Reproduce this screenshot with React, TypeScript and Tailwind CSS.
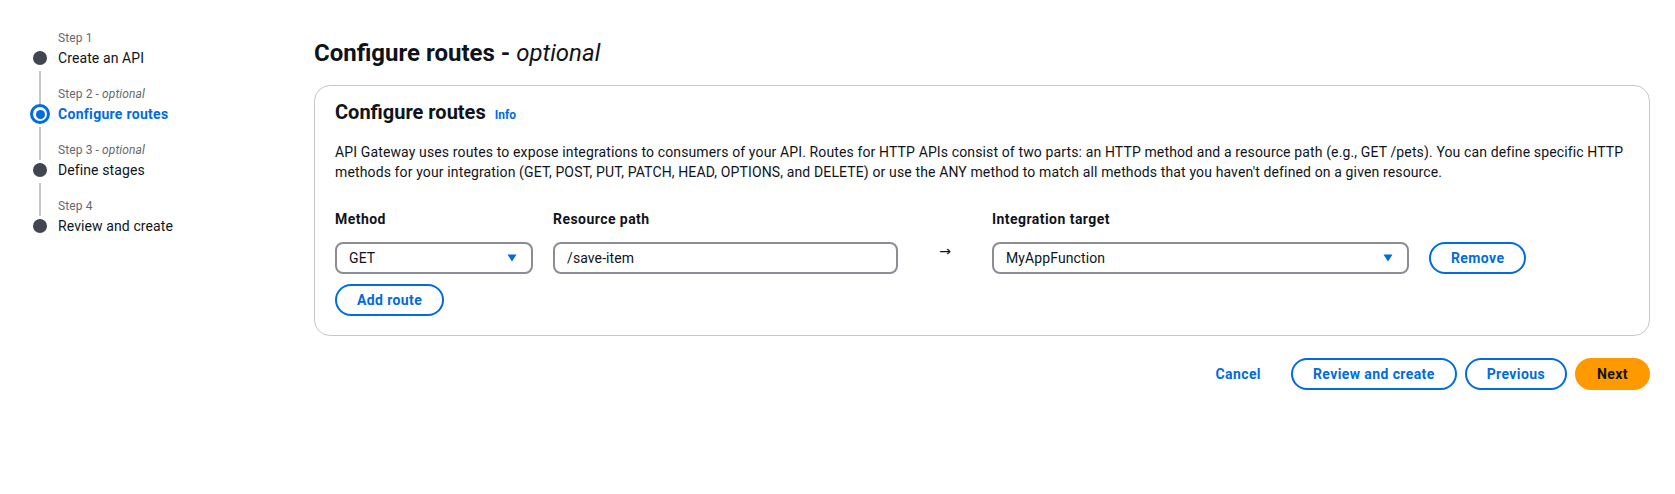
import React from 'react';

const steps = [
  { label: 'Step 1', optional: false, title: 'Create an API' },
  { label: 'Step 2', optional: true, title: 'Configure routes', active: true },
  { label: 'Step 3', optional: true, title: 'Define stages' },
  { label: 'Step 4', optional: false, title: 'Review and create' },
];

function Caret() {
  return (
    <svg width="10" height="8" viewBox="0 0 10 8" className="shrink-0">
      <path d="M0.5 0.5 L9.5 0.5 L5 7.5 Z" fill="#006ce0" />
    </svg>
  );
}

function Select({ value }: { value: string }) {
  return (
    <div className="flex h-8 items-center justify-between rounded-lg border-2 border-[#8c8c94] bg-white pl-3 pr-[14px] text-sm tracking-[0.1px] text-[#0f141a]">
      <span>{value}</span>
      <Caret />
    </div>
  );
}

function OutlineButton({ children }: { children: React.ReactNode }) {
  return (
    <button className="flex h-8 items-center justify-center whitespace-nowrap rounded-full border-2 border-[#006ce0] bg-white px-[20px] text-sm font-bold tracking-[0.4px] text-[#006ce0]">
      {children}
    </button>
  );
}

function Sidebar() {
  return (
    <nav className="w-[314px] shrink-0 pl-[30px] pt-[28px]">
      {steps.map((s, i) => (
        <div key={s.label} className="flex gap-2">
          <div className="flex w-5 flex-col items-center">
            {i > 0 ? <div className="h-5 w-[2px] bg-[#c6c6cd]" /> : <div className="h-5" />}
            <div className="flex h-5 w-5 items-center justify-center">
              {s.active ? (
                <div className="flex h-5 w-5 items-center justify-center rounded-full border-[3px] border-[#006ce0] bg-white">
                  <div className="h-[9px] w-[9px] rounded-full bg-[#006ce0]" />
                </div>
              ) : (
                <div className="h-[14px] w-[14px] rounded-full bg-[#424650]" />
              )}
            </div>
            {i < steps.length - 1 && <div className="mt-[3px] w-[2px] flex-1 bg-[#c6c6cd]" />}
          </div>
          <div className="pb-4">
            <div className="text-xs leading-5 tracking-[0.1px] text-[#656871]">
              {s.label}
              {s.optional && (
                <>
                  {' - '}
                  <i>optional</i>
                </>
              )}
            </div>
            <div
              className={
                s.active
                  ? 'text-sm font-bold leading-5 tracking-[0.3px] text-[#006ce0]'
                  : 'text-sm leading-5 tracking-[0.1px] text-[#0f141a]'
              }
            >
              {s.title}
            </div>
          </div>
        </div>
      ))}
    </nav>
  );
}

export default function App() {
  return (
    <div className="flex min-h-screen bg-white font-['Roboto',sans-serif] text-[#0f141a]">
      <Sidebar />

      <main className="flex-1 pr-[25px] pt-[38px]">
        <h1 className="text-2xl font-bold leading-[30px]">
          Configure routes - <i className="font-normal">optional</i>
        </h1>

        <section className="mt-[17px] rounded-2xl border border-[#c6c6cd] px-5 pb-[19px] pt-[14px]">
          <div className="flex items-baseline gap-[9px]">
            <h2 className="text-xl font-bold leading-6">Configure routes</h2>
            <a className="text-xs font-bold text-[#006ce0]">Info</a>
          </div>

          <p className="mt-[18px] whitespace-nowrap text-sm leading-5 tracking-[0.13px]">
            API Gateway uses routes to expose integrations to consumers of your API. Routes for HTTP APIs consist of
            two parts: an HTTP method and a resource path (e.g., GET /pets). You can define specific HTTP
            <br />
            methods for your integration (GET, POST, PUT, PATCH, HEAD, OPTIONS, and DELETE) or use the ANY method to
            match all methods that you haven't defined on a given resource.
          </p>

          <div className="mt-[27px] grid grid-cols-[198px_345px_54px_417px_auto] gap-x-5 gap-y-[13px]">
            <div className="text-sm font-bold leading-5 tracking-[0.45px]">Method</div>
            <div className="text-sm font-bold leading-5 tracking-[0.45px]">Resource path</div>
            <div />
            <div className="text-sm font-bold leading-5 tracking-[0.45px]">Integration target</div>
            <div />

            <Select value="GET" />
            <div className="flex h-8 items-center rounded-lg border-2 border-[#8c8c94] bg-white px-3 text-sm tracking-[0.1px]">
              /save-item
            </div>
            <div className="flex h-8 justify-center pt-[1px] font-['DejaVu_Sans',sans-serif] text-sm leading-4">→</div>
            <Select value="MyAppFunction" />
            <div className="flex">
              <OutlineButton>Remove</OutlineButton>
            </div>
          </div>

          <div className="mt-[10px] flex">
            <OutlineButton>Add route</OutlineButton>
          </div>
        </section>

        <div className="mt-[22px] flex items-center justify-end gap-2">
          <button className="flex h-8 items-center px-[22px] text-sm font-bold tracking-[0.4px] text-[#006ce0]">
            Cancel
          </button>
          <OutlineButton>Review and create</OutlineButton>
          <OutlineButton>Previous</OutlineButton>
          <button className="flex h-8 items-center rounded-full border-2 border-[#ff9900] bg-[#ff9900] px-[20px] text-sm font-bold tracking-[0.4px] text-[#0f141a]">
            Next
          </button>
        </div>
      </main>
    </div>
  );
}
